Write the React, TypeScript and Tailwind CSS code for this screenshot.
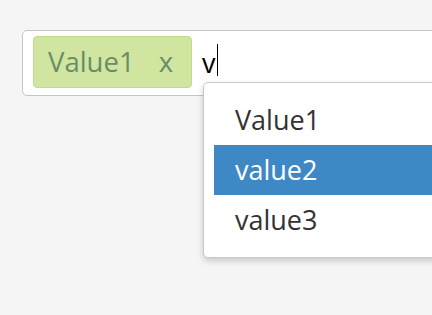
import React from "react";

export default function App() {
  return (
    <div
      className="w-[432px] h-[315px] bg-[#f5f5f5] overflow-hidden relative"
      style={{ fontFamily: '"Open Sans", sans-serif' }}
    >
      <div className="pt-[30px] pl-[22px]">
        <div className="relative w-[440px] h-[66px] bg-white border border-[#c6c6c6] rounded-[5px] flex items-start pl-[10px] pt-[5px]">
          <div className="h-[52px] w-[159px] bg-[#d0e6a0] border border-[#bfdc8c] rounded-[4px] flex items-center pl-[14px] text-[27.5px] text-[#6c8c68] leading-none">
            <span>Value1</span>
            <span className="ml-[24px]">x</span>
          </div>
          <div className="h-[52px] flex items-center ml-[10px] text-[27px] text-black leading-none">
            <span>v</span>
            <span className="inline-block w-px h-[32px] bg-black ml-[1px] -mt-[4px]"></span>
          </div>
          <div className="absolute left-[180px] top-[51px] w-[260px] bg-white border border-[#c8c8c8] rounded-[5px] shadow-[0_3px_6px_rgba(0,0,0,0.18)] pt-[12px] pb-[12px] pl-[10px]">
            <div className="h-[50px] flex items-center pl-[21px] text-[27px] text-[#333333]">Value1</div>
            <div className="h-[50px] flex items-center pl-[21px] text-[27px] text-white bg-[#3f88c6]">value2</div>
            <div className="h-[50px] flex items-center pl-[21px] text-[27px] text-[#333333]">value3</div>
          </div>
        </div>
      </div>
    </div>
  );
}
